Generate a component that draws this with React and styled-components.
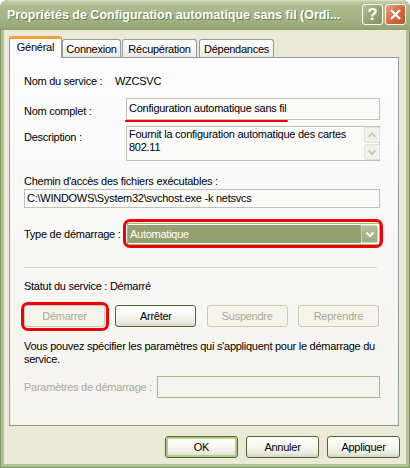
import React from "react";
import styled, { createGlobalStyle } from "styled-components";

const GlobalStyle = createGlobalStyle`
  html, body {
    margin: 0;
    padding: 0;
    background: #fff;
  }
  body {
    font-family: "Liberation Sans", Arial, sans-serif;
    font-size: 11px;
    letter-spacing: -0.26px;
    color: #000;
  }
`;

const Window = styled.div`
  width: 410px;
  height: 468px;
  display: flex;
  flex-direction: column;
  background: #7f9660;
  border-radius: 8px 8px 0 0;
  overflow: hidden;
`;

const TitleBar = styled.div`
  height: 30px;
  flex: none;
  display: flex;
  align-items: center;
  box-sizing: border-box;
  padding: 0 4px 1px 7px;
  background: linear-gradient(#dde5c6 0, #bccaa0 2px, #abbb8d 7px, #a3b485 18px, #97a978 27px, #8c9f6c 30px);
  border-radius: 8px 8px 0 0;
`;

const Title = styled.div`
  flex: 1;
  color: #fff;
  font-weight: bold;
  font-size: 12.5px;
  letter-spacing: 0;
  white-space: nowrap;
  overflow: hidden;
  text-shadow: 1px 1px 0 #6a7a4b;
`;

const CapButton = styled.div`
  width: 21px;
  height: 21px;
  margin-left: 2px;
  box-sizing: border-box;
  border: 1px solid #fff;
  border-radius: 3px;
  display: flex;
  align-items: center;
  justify-content: center;
  color: #fff;
  font-weight: bold;
  font-size: 17px;
  letter-spacing: 0;
  background: ${(p) =>
    p.$close
      ? "linear-gradient(135deg, #eba07c, #d4663f 55%, #c0512d)"
      : "linear-gradient(135deg, #b9c59a, #93a26f 55%, #84925f)"};
`;

const Frame = styled.div`
  flex: 1;
  display: flex;
  flex-direction: column;
  margin: 0 1px 1px;
  border: 3px solid #afc093;
  border-top: 0;
  background: #ece9d8;
  padding: 6px 0 0 5px;
`;

const TabStrip = styled.div`
  display: flex;
  align-items: flex-end;
  height: 21px;
  position: relative;
  z-index: 1;
`;

const Tab = styled.div`
  width: ${(p) => p.$w}px;
  height: ${(p) => (p.$active ? 22 : 18)}px;
  margin-bottom: ${(p) => (p.$active ? -1 : 0)}px;
  margin-right: ${(p) => p.$gap || 0}px;
  box-sizing: border-box;
  display: flex;
  align-items: center;
  justify-content: center;
  padding-bottom: ${(p) => (p.$active ? 3 : 0)}px;
  border: 1px solid #919b9c;
  border-bottom: 0;
  border-radius: 3px 3px 0 0;
  background: ${(p) => (p.$active ? "#fcfcfe" : "linear-gradient(#ffffff, #f3f2ed 70%, #e9e8e1)")};
  border-top: ${(p) => (p.$active ? "3px solid #f0a03a" : "1px solid #919b9c")};
`;

const Panel = styled.div`
  width: 390px;
  height: 369px;
  box-sizing: border-box;
  border: 1px solid #919b9c;
  background: linear-gradient(#fcfcfe, #f4f3ee);
  padding: 15px 18px 0 14px;
`;

const Row = styled.div`
  display: grid;
  grid-template-columns: ${(p) => p.$label}px 1fr;
  align-items: ${(p) => p.$align || "center"};
  margin-top: ${(p) => p.$top || 0}px;
  height: ${(p) => p.$h}px;
`;

const Label = styled.div`
  padding-top: ${(p) => p.$pad || 0}px;
  color: ${(p) => (p.$disabled ? "#aca899" : "#000")};
  white-space: nowrap;
`;

const Line = styled.div`
  margin-top: ${(p) => p.$top || 0}px;
  line-height: 14px;
`;

const ReadBox = styled.div`
  height: ${(p) => p.$h}px;
  margin-top: ${(p) => p.$top || 0}px;
  box-sizing: border-box;
  border: 1px solid #c4c1b4;
  background: #fbfbf9;
  padding: ${(p) => p.$pad || "2px 0 0 2px"};
  line-height: ${(p) => p.$lh || 14}px;
  white-space: nowrap;
  display: flex;
`;

const BoxText = styled.div`
  flex: 1;
  white-space: normal;
`;

const Marked = styled.span`
  position: relative;
  &::after {
    content: "";
    position: absolute;
    left: -4px;
    right: -2px;
    bottom: -3px;
    height: 2px;
    border-radius: 1px;
    background: #f00000;
  }
`;

const ScrollCol = styled.div`
  width: 16px;
  display: flex;
  flex-direction: column;
  gap: 1px;
  margin: -1px -1px 0 0;
`;

const ScrollBtn = styled.div`
  height: 16px;
  box-sizing: border-box;
  border: 1px solid #e3e1d8;
  border-radius: 2px;
  background: #f1f0ea;
  display: flex;
  align-items: center;
  justify-content: center;
`;

const Highlight = styled.div`
  position: relative;
  &::after {
    content: "";
    position: absolute;
    inset: ${(p) => p.$inset || "-4px"};
    border: 3px solid #f00000;
    border-radius: 7px;
    pointer-events: none;
  }
`;

const Select = styled.div`
  height: 22px;
  box-sizing: border-box;
  border: 1px solid #a4b97f;
  background: #fff;
  display: flex;
  padding: 1px 1px 1px 0;
`;

const SelectValue = styled.div`
  flex: 1;
  background: #93a070;
  color: #fff;
  padding-left: 2px;
  line-height: 18px;
`;

const DropBtn = styled.div`
  width: 17px;
  box-sizing: border-box;
  border: 1px solid #c8d2b4;
  border-radius: 2px;
  background: linear-gradient(#b3c098, #9dab80);
  display: flex;
  align-items: center;
  justify-content: center;
`;

const Separator = styled.div`
  margin-top: 22px;
  margin-right: 3px;
  border-top: 1px solid #d0d0bf;
  border-bottom: 1px solid #ffffff;
`;

const ButtonRow = styled.div`
  display: flex;
  justify-content: ${(p) => p.$justify || "space-between"};
  gap: ${(p) => p.$gap || 0}px;
  margin-top: ${(p) => p.$top || 0}px;
  padding-right: ${(p) => p.$right || 0}px;
`;

const Button = styled.button`
  width: ${(p) => p.$w}px;
  height: 22px;
  box-sizing: border-box;
  padding: 0;
  font: inherit;
  letter-spacing: inherit;
  font-size: 11px;
  border-radius: 3px;
  border: 1px solid ${(p) => (p.disabled ? "#c9c7ba" : "#4a6a2a")};
  color: ${(p) => (p.disabled ? "#aca899" : "#000")};
  background: ${(p) =>
    p.disabled ? "#f5f4ea" : "linear-gradient(#ffffff, #f8f7f0 45%, #ecebe2 80%, #d8d3c4)"};
  box-shadow: ${(p) => (p.$default ? "inset 0 0 0 2px #b6cc8f" : "none")};
`;

const Paragraph = styled.div`
  margin-top: 13px;
  line-height: 13px;
  padding-right: 2px;
`;

const EditBox = styled.div`
  height: 22px;
  box-sizing: border-box;
  border: 1px solid #a4b97f;
  background: #f4f3ee;
`;

const Footer = styled(ButtonRow)`
  margin-top: 10px;
`;

const Chevron = ({ up, color, w = 2 }) => (
  <svg width="10" height="8" viewBox="0 0 10 8">
    <path
      d={up ? "M1.5 6 L5 2.5 L8.5 6" : "M1.5 2.5 L5 6 L8.5 2.5"}
      fill="none"
      stroke={color}
      strokeWidth={w}
    />
  </svg>
);

export default function App() {
  return (
    <>
      <GlobalStyle />
      <Window>
        <TitleBar>
          <Title>Propriétés de Configuration automatique sans fil (Ordi...</Title>
          <CapButton>?</CapButton>
          <CapButton $close>
            <svg width="13" height="13" viewBox="0 0 13 13">
              <path d="M2 2 L11 11 M11 2 L2 11" stroke="#fff" strokeWidth="2.4" />
            </svg>
          </CapButton>
        </TitleBar>
        <Frame>
          <TabStrip>
            <Tab $active $w={53}>Général</Tab>
            <Tab $w={59} $gap={1}>Connexion</Tab>
            <Tab $w={75} $gap={2}>Récupération</Tab>
            <Tab $w={75}>Dépendances</Tab>
          </TabStrip>
          <Panel>
            <Row $label={91} $h={16}>
              <Label>Nom du service :</Label>
              <div>WZCSVC</div>
            </Row>
            <Row $label={102} $h={22} $top={9}>
              <Label $pad={3}>Nom complet :</Label>
              <ReadBox $h={22}>
                <Marked>Configuration automatique sans fil</Marked>
              </ReadBox>
            </Row>
            <Row $label={102} $h={35} $top={6} $align="start">
              <Label $pad={5}>Description :</Label>
              <ReadBox $h={35} $pad="1px 0 0 2px" $lh={13}>
                <BoxText>Fournit la configuration automatique des cartes 802.11</BoxText>
                <ScrollCol>
                  <ScrollBtn>
                    <Chevron up color="#c9c8be" />
                  </ScrollBtn>
                  <ScrollBtn>
                    <Chevron color="#c9c8be" />
                  </ScrollBtn>
                </ScrollCol>
              </ReadBox>
            </Row>
            <Line $top={13}>Chemin d'accès des fichiers exécutables :</Line>
            <ReadBox $h={19} $pad="1px 0 0 2px" $top={1}>
              C:\WINDOWS\System32\svchost.exe -k netsvcs
            </ReadBox>
            <Row $label={103} $h={22} $top={15}>
              <Label>Type de démarrage :</Label>
              <Highlight $inset="-4px -3px -3px -4px">
                <Select>
                  <SelectValue>Automatique</SelectValue>
                  <DropBtn>
                    <Chevron color="#fff" w={2.2} />
                  </DropBtn>
                </Select>
              </Highlight>
            </Row>
            <Separator />
            <Line $top={10}>Statut du service : Démarré</Line>
            <ButtonRow $top={12} $right={1}>
              <Highlight $inset="-3px -4px -4px -3px">
                <Button $w={81} disabled>
                  Démarrer
                </Button>
              </Highlight>
              <Button $w={81}>Arrêter</Button>
              <Button $w={81} disabled>
                Suspendre
              </Button>
              <Button $w={81} disabled>
                Reprendre
              </Button>
            </ButtonRow>
            <Paragraph>
              Vous pouvez spécifier les paramètres qui s'appliquent pour le démarrage du service.
            </Paragraph>
            <Row $label={133} $h={22} $top={10}>
              <Label $disabled>Paramètres de démarrage :</Label>
              <EditBox />
            </Row>
          </Panel>
          <Footer $justify="flex-end" $gap={8} $right={6}>
            <Button $w={73} $default>
              OK
            </Button>
            <Button $w={73}>Annuler</Button>
            <Button $w={73}>Appliquer</Button>
          </Footer>
        </Frame>
      </Window>
    </>
  );
}
